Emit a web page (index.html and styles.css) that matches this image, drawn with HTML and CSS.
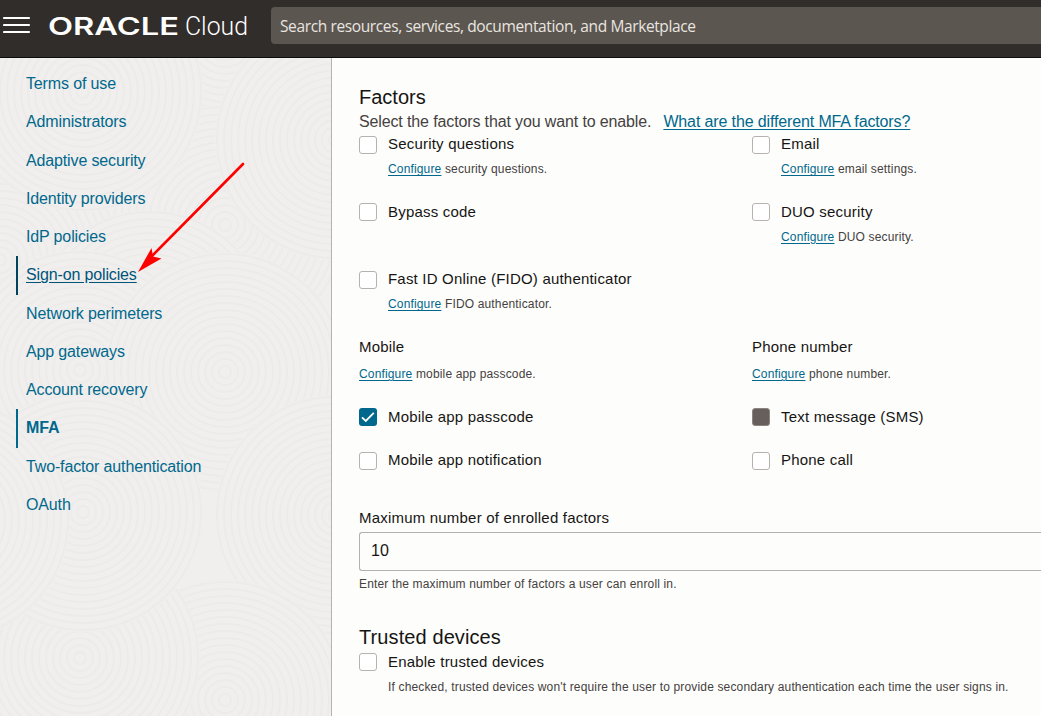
FILE: index.html
```html
<!DOCTYPE html>
<html lang="en">
<head>
<meta charset="utf-8">
<title>Oracle Cloud</title>
<link rel="stylesheet" href="styles.css">
</head>
<body>
<header class="topbar">
  <svg class="menu" width="28" height="18" viewBox="0 0 28 18"><path d="M1 2H26M1 9H26M1 16H26" stroke="#fff" stroke-width="2.2" stroke-linecap="round"/></svg>
  <svg class="logo" width="202" height="34" viewBox="0 0 202 34">
    <text class="brand" x="0" y="23" textLength="131" lengthAdjust="spacingAndGlyphs">ORACLE</text>
    <text class="product" x="137" y="23" textLength="63" lengthAdjust="spacingAndGlyphs">Cloud</text>
  </svg>
  <div class="search">Search resources, services, documentation, and Marketplace</div>
</header>
<div class="layout">
  <aside class="sidebar">
    <svg class="texture" width="331" height="658" viewBox="0 58 331 658">
      <defs>
        <g id="rings">
          <circle r="120" fill="#f0efee"/>
          <g fill="none" stroke="#ecebea" stroke-width="2">
            <circle r="6"/><circle r="13"/><circle r="20"/><circle r="27"/><circle r="34"/><circle r="41"/><circle r="48"/><circle r="55"/><circle r="62"/><circle r="69"/><circle r="76"/><circle r="83"/><circle r="90"/><circle r="97"/><circle r="104"/><circle r="111"/><circle r="118"/>
          </g>
        </g>
      </defs>
      <use href="#rings" x="225" y="40"/>
      <use href="#rings" x="225" y="225"/>
      <use href="#rings" x="0" y="260"/>
      <use href="#rings" x="335" y="140"/>
      <use href="#rings" x="83" y="92"/>
      <use href="#rings" x="150" y="330"/>
      <use href="#rings" x="225" y="720"/>
      <use href="#rings" x="80" y="370"/>
      <use href="#rings" x="225" y="372"/>
      <use href="#rings" x="335" y="515"/>
      <use href="#rings" x="225" y="700"/>
      <use href="#rings" x="80" y="658"/>
      <use href="#rings" x="83" y="512"/>
      <use href="#rings" x="-50" y="520"/>
    </svg>
    <nav class="nav">
      <a class="item">Terms of use</a>
      <a class="item">Administrators</a>
      <a class="item">Adaptive security</a>
      <a class="item">Identity providers</a>
      <a class="item">IdP policies</a>
      <a class="item hovered">Sign-on policies</a>
      <a class="item">Network perimeters</a>
      <a class="item">App gateways</a>
      <a class="item">Account recovery</a>
      <a class="item current">MFA</a>
      <a class="item">Two-factor authentication</a>
      <a class="item">OAuth</a>
    </nav>
    <svg class="arrow" width="120" height="120" viewBox="130 158 120 120"><path d="M243 164L152 256" stroke="#f00" stroke-width="2.6" stroke-linecap="round"/><path d="M138 272L151.500 248L153 256.500L161.500 258.500Z" fill="#f00"/></svg>
  </aside>
  <main class="content">
    <h2 class="title">Factors</h2>
    <p class="intro"><span class="lead">Select the factors that you want to enable.</span><a class="link help">What are the different MFA factors?</a></p>
    <section class="grid">
      <div class="option"><i class="box"></i><span class="label">Security questions</span><p class="hint"><a class="link">Configure</a> security questions.</p></div>
      <div class="option"><i class="box"></i><span class="label">Email</span><p class="hint"><a class="link">Configure</a> email settings.</p></div>
      <div class="option"><i class="box raised"></i><span class="label">Bypass code</span></div>
      <div class="option"><i class="box raised"></i><span class="label">DUO security</span><p class="hint"><a class="link">Configure</a> DUO security.</p></div>
      <div class="option"><i class="box"></i><span class="label">Fast ID Online (FIDO) authenticator</span><p class="hint"><a class="link">Configure</a> FIDO authenticator.</p></div>
    </section>
    <section class="groups">
      <div class="group">
        <h3 class="label">Mobile</h3>
        <p class="hint"><a class="link">Configure</a> mobile app passcode.</p>
        <div class="option"><i class="box checked"><svg width="18" height="18" viewBox="0 0 18 18"><path d="M3 9.300L6.800 13L14.800 4.800" fill="none" stroke="#fff" stroke-width="1.800"/></svg></i><span class="label">Mobile app passcode</span></div>
        <div class="option"><i class="box"></i><span class="label">Mobile app notification</span></div>
      </div>
      <div class="group">
        <h3 class="label">Phone number</h3>
        <p class="hint"><a class="link">Configure</a> phone number.</p>
        <div class="option"><i class="box disabled"></i><span class="label">Text message (SMS)</span></div>
        <div class="option"><i class="box"></i><span class="label">Phone call</span></div>
      </div>
    </section>
    <section class="field">
      <span class="label">Maximum number of enrolled factors</span>
      <div class="input">10</div>
      <p class="hint">Enter the maximum number of factors a user can enroll in.</p>
    </section>
    <section class="trusted">
      <h2 class="title spaced">Trusted devices</h2>
      <div class="option"><i class="box raised"></i><span class="label">Enable trusted devices</span><p class="hint">If checked, trusted devices won't require the user to provide secondary authentication each time the user signs in.</p></div>
    </section>
  </main>
</div>
</body>
</html>
```
FILE: styles.css
```css
* { box-sizing: border-box; }
body { margin: 0; height: 716px; overflow: hidden; background: #fdfdfc; color: #161513; font-family: "Liberation Sans", Arial, sans-serif; }
h2, h3, p { margin: 0; font-weight: 400; }
.topbar { display: flex; height: 58px; padding: 7px 0 0 3px; background: #312d2a; border-bottom: 1px solid #0e0d0c; }
.menu { flex: none; margin: 9px 17px 0 0; }
.logo { flex: none; margin: 5px 21px 0 0; fill: #fff; overflow: visible; }
.brand { font: 600 24px Inter, sans-serif; }
.product { font: 300 26px Roboto, sans-serif; }
.search { flex: 1; height: 37px; padding-left: 9px; border-radius: 4px 0 0 4px; background: #5b564f; color: #e9e5e0; font: 15.5px/38px "Open Sans", sans-serif; letter-spacing: -0.38px; white-space: nowrap; }
.layout { display: flex; height: 658px; }
.sidebar { position: relative; flex: none; width: 332px; padding-top: 7px; border-right: 1px solid #b8b2ae; background: #f0efee; }
.texture { position: absolute; left: 0; top: 0; }
.arrow { position: absolute; left: 130px; top: 100px; }
.nav { position: relative; display: flex; flex-direction: column; padding-left: 16px; }
.item { height: 38.27px; padding-left: 8px; border-left: 2px solid transparent; color: #00688c; font-size: 16px; line-height: 38px; letter-spacing: -0.14px; white-space: nowrap; }
.hovered { border-color: #00445c; color: #00537a; text-decoration: underline; text-underline-offset: 2px; }
.current { border-color: #00688c; font-weight: 700; }
.content { flex: 1; min-width: 0; padding: 27px 0 0 27px; }
.title { font-size: 20px; line-height: 24px; }
.spaced { letter-spacing: 0.1px; }
.intro { display: flex; gap: 12px; height: 24px; font-size: 16px; line-height: 26px; letter-spacing: -0.13px; white-space: nowrap; }
.lead { color: #45413e; }
.link { color: #00688c; text-decoration: underline; text-underline-offset: 2px; }
.grid { display: grid; grid-template-columns: 393px 1fr; grid-auto-rows: 67.6px; }
.option { display: grid; grid-template-columns: 18px 1fr; grid-auto-rows: 22px; column-gap: 11px; row-gap: 3px; align-content: start; }
.box { width: 18px; height: 18px; margin-top: 3px; border: 1px solid #b6b2ae; border-radius: 3px; background: #fff; }
.raised { margin-top: 2px; }
.checked { border: 0; background: #00688c; margin-top: 2px; }
.disabled { border-color: #8b8580; background: #665f5b; margin-top: 2px; }
.checked svg { display: block; }
.label { display: block; font-size: 15px; line-height: 22px; letter-spacing: 0.2px; white-space: nowrap; }
.hint { color: #45413e; font-size: 12px; line-height: 22px; letter-spacing: 0.156px; white-space: nowrap; }
.option .hint { grid-column: 2; }
.groups { display: grid; grid-template-columns: 393px 1fr; }
.group > .hint { margin: 5px 0 21px; }
.group .option + .option { margin-top: 21px; }
.field { margin-top: 36px; }
.input { height: 39px; margin: 3px 0 2px; padding-left: 11px; border: 1px solid #b3b0ad; border-right: 0; border-radius: 3px 0 0 3px; font-size: 16px; line-height: 36px; }
.trusted { margin-top: 30px; }
.trusted .option { margin-top: 2px; }
```
